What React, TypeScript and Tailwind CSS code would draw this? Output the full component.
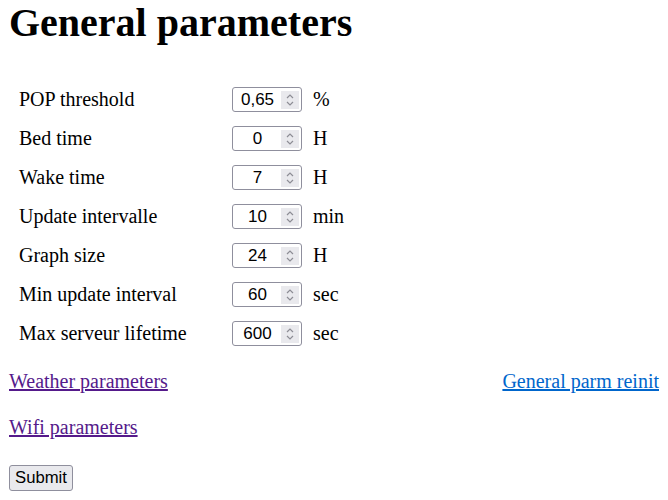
import React from 'react'

const rows = [
  { label: 'POP threshold', value: '0,65', unit: '%' },
  { label: 'Bed time', value: '0', unit: 'H' },
  { label: 'Wake time', value: '7', unit: 'H' },
  { label: 'Update intervalle', value: '10', unit: 'min' },
  { label: 'Graph size', value: '24', unit: 'H' },
  { label: 'Min update interval', value: '60', unit: 'sec' },
  { label: 'Max serveur lifetime', value: '600', unit: 'sec' },
]

const Spinner = () => (
  <div className="w-[18px] h-[18px] bg-[#e9e9ed] flex items-center justify-center">
    <svg width="10" height="16" viewBox="0 0 10 16" fill="none" stroke="#8d8d95" strokeWidth="1.2">
      <path d="M2 6 L5 3 L8 6" />
      <path d="M2 10 L5 13 L8 10" />
    </svg>
  </div>
)

const App = () => {
  return (
    <div className="w-[668px] h-[500px] bg-white text-black font-['Liberation_Serif',serif] text-[20px] overflow-hidden">
      <h1 className="pl-[9px] text-[40px] font-bold leading-[46px]">General parameters</h1>

      <div className="mt-[34px] flex flex-col">
        {rows.map((r) => (
          <div key={r.label} className="h-[39px] flex items-center">
            <div className="w-[232px] pl-[19px] shrink-0 leading-[23px]">{r.label}</div>
            <div className="w-[70px] h-[25px] shrink-0 border border-[#8f8f9d] rounded-[3px] flex items-center pl-[1px] pr-[2px]">
              <div className="flex-1 text-center font-['Liberation_Sans',sans-serif] text-[17px] leading-none">{r.value}</div>
              <Spinner />
            </div>
            <div className="pl-[11px] leading-[23px]">{r.unit}</div>
          </div>
        ))}
      </div>

      <div className="mt-[17px] flex justify-between px-[9px] leading-[23px]">
        <a href="#" className="text-[#551a8b] underline">Weather parameters</a>
        <a href="#" className="text-[#0066cc] underline">General parm reinit</a>
      </div>

      <div className="mt-[23px] px-[9px] leading-[23px]">
        <a href="#" className="text-[#551a8b] underline">Wifi parameters</a>
      </div>

      <div className="mt-[22px] px-[9px]">
        <button className="h-[26px] px-[5px] bg-[#e9e9ed] border border-[#8f8f9d] rounded-[3px] font-['Liberation_Sans',sans-serif] text-[16.7px] leading-none">
          Submit
        </button>
      </div>
    </div>
  )
}

export default App
